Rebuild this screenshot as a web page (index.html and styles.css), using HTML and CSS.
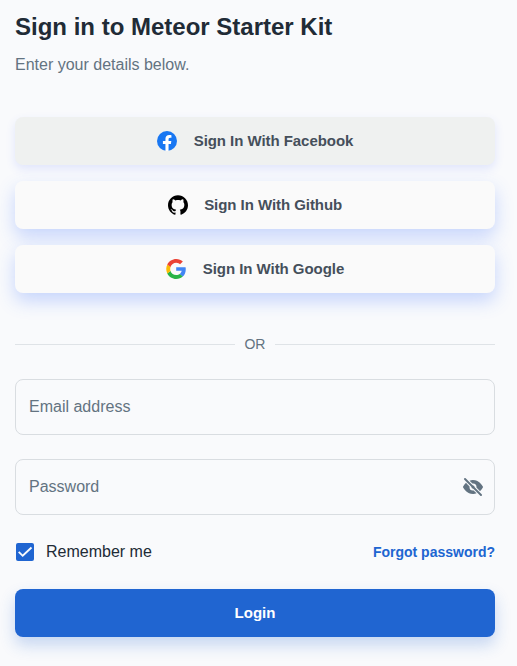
FILE: index.html
```html
<!DOCTYPE html>
<html lang="en">
<head>
<meta charset="utf-8">
<title>Sign in</title>
<link rel="stylesheet" href="styles.css">
</head>
<body>
<main class="page">
  <h1 class="title">Sign in to Meteor Starter Kit</h1>
  <p class="subtitle">Enter your details below.</p>

  <div class="social">
    <button class="social-btn active" type="button">
      <svg class="brand" viewBox="0 0 24 24"><circle cx="12" cy="12" r="12" fill="#1877f2"/><path fill="#fff" d="M16.67 15.54l.53-3.47h-3.33V9.82c0-.95.47-1.87 1.96-1.87h1.51V5s-1.37-.24-2.68-.24c-2.74 0-4.53 1.66-4.53 4.67v2.64H7.08v3.47h3.05v8.32q1.87.3 3.74 0v-8.32z"/></svg>
      <span>Sign In With Facebook</span>
    </button>
    <button class="social-btn github" type="button">
      <svg class="brand" viewBox="0 0 24 24"><path d="M12 .297c-6.63 0-12 5.373-12 12 0 5.303 3.438 9.8 8.205 11.385.6.113.82-.258.82-.577 0-.285-.01-1.04-.015-2.04-3.338.724-4.042-1.61-4.042-1.61C4.422 18.07 3.633 17.7 3.633 17.7c-1.087-.744.084-.729.084-.729 1.205.084 1.838 1.236 1.838 1.236 1.07 1.835 2.809 1.305 3.495.998.108-.776.417-1.305.76-1.605-2.665-.3-5.466-1.332-5.466-5.93 0-1.31.465-2.38 1.235-3.22-.135-.303-.54-1.523.105-3.176 0 0 1.005-.322 3.3 1.23.96-.267 1.98-.399 3-.405 1.02.006 2.04.138 3 .405 2.28-1.552 3.285-1.23 3.285-1.23.645 1.653.24 2.873.12 3.176.765.84 1.23 1.91 1.23 3.22 0 4.61-2.805 5.625-5.475 5.92.42.36.81 1.096.81 2.22 0 1.606-.015 2.896-.015 3.286 0 .315.21.69.825.57C20.565 22.092 24 17.592 24 12.297c0-6.627-5.373-12-12-12"/></svg>
      <span>Sign In With Github</span>
    </button>
    <button class="social-btn" type="button">
      <svg class="brand" viewBox="0 0 256 262"><path fill="#4285F4" d="M255.878 133.451c0-10.734-.871-18.567-2.756-26.69H130.55v48.448h71.947c-1.45 12.04-9.283 30.172-26.69 42.356l-.244 1.622 38.755 30.023 2.685.268c24.659-22.774 38.875-56.282 38.875-96.027"/><path fill="#28B446" d="M130.55 261.1c35.248 0 64.839-11.605 86.453-31.622l-41.196-31.913c-11.024 7.688-25.82 13.055-45.257 13.055-34.523 0-63.824-22.773-74.269-54.25l-1.531.13-40.298 31.187-.527 1.465C35.393 231.798 79.49 261.1 130.55 261.1"/><path fill="#FBBC05" d="M56.281 156.37c-2.756-8.123-4.351-16.827-4.351-25.82 0-8.994 1.595-17.697 4.206-25.82l-.073-1.73L15.26 71.312l-1.335.635C5.077 89.644 0 109.517 0 130.55s5.077 40.905 13.925 58.602l42.356-32.782"/><path fill="#EB4335" d="M130.55 50.479c24.514 0 41.05 10.589 50.479 19.438l36.844-35.974C195.245 12.91 165.798 0 130.55 0 79.49 0 35.393 29.301 13.925 71.947l42.211 32.783c10.59-31.477 39.891-54.251 74.414-54.251"/></svg>
      <span>Sign In With Google</span>
    </button>
  </div>

  <div class="divider"><span>OR</span></div>

  <form class="form">
    <div class="field"><span>Email address</span></div>
    <div class="field">
      <span>Password</span>
      <svg class="eye" viewBox="0 0 24 24"><circle cx="12" cy="12" r="1.5"/><path d="M15.29 18.12L14 16.78l-.07-.07-1.27-1.27a4.07 4.07 0 0 1-.61.06A3.5 3.5 0 0 1 8.5 12a4.07 4.07 0 0 1 .06-.61l-2-2L5 7.87a15.89 15.89 0 0 0-2.87 3.63 1 1 0 0 0 0 1c.63 1.09 4 6.5 9.89 6.5h.25a9.48 9.48 0 0 0 3.23-.67zM8.59 5.76l2.8 2.8A4.07 4.07 0 0 1 12 8.5a3.5 3.5 0 0 1 3.5 3.5 4.07 4.07 0 0 1-.06.61l2.68 2.68.84.84a15.89 15.89 0 0 0 2.91-3.63 1 1 0 0 0 0-1c-.64-1.11-4.16-6.68-10.14-6.5a9.48 9.48 0 0 0-3.23.67zM20.71 19.29L19.41 18l-2-2-9.52-9.53L6.42 5 4.71 3.29a1 1 0 0 0-1.42 1.42L5.53 7l1.75 1.7 7.31 7.3.07.07L16 17.41l.59.59 2.7 2.71a1 1 0 0 0 1.42 0 1 1 0 0 0 0-1.42z"/></svg>
    </div>
    <div class="options">
      <label class="remember">
        <svg class="check" viewBox="0 0 18 18"><rect width="18" height="18" rx="2" fill="#2065d1"/><path d="M2.7 8.8l4 4 8.8-8.3" fill="none" stroke="#f9fafc" stroke-width="1.9"/></svg>
        <span>Remember me</span>
      </label>
      <a class="forgot">Forgot password?</a>
    </div>
    <button class="login" type="button">Login</button>
  </form>
</main>
</body>
</html>
```
FILE: styles.css
```css
* { box-sizing: border-box; }

body {
  margin: 0;
  background: #f9fafc;
  color: #212b36;
  font: 16px/24px "Liberation Sans", Arial, sans-serif;
}

.page {
  width: 517px;
  height: 666px;
  padding: 9px 22px 0 15px;
  overflow: hidden;
}

.title {
  margin: 0;
  font-size: 24px;
  line-height: 36px;
  font-weight: 700;
}

.subtitle {
  margin: 8px 0 0;
  color: #637381;
}

.social {
  display: grid;
  gap: 16px;
  margin-top: 40px;
}

.social-btn {
  display: flex;
  align-items: center;
  justify-content: center;
  gap: 17px;
  height: 48px;
  padding: 0;
  border: 0;
  border-radius: 8px;
  background: #fafafa;
  box-shadow: 0 8px 18px rgba(63, 114, 255, 0.27);
  color: #454f5b;
  font: 700 15px/26px "Liberation Sans", Arial, sans-serif;
  letter-spacing: -0.05px;
}

.social-btn.github {
  gap: 16.4px;
}

.social-btn.active {
  background: #eff1f0;
  box-shadow: 0 4px 10px rgba(63, 94, 255, 0.13);
}

.brand {
  width: 20px;
  height: 20px;
}

.divider {
  display: flex;
  align-items: center;
  gap: 10px;
  height: 22px;
  margin: 40px 0 24px;
  color: #637381;
  font-size: 14px;
}

.divider span {
  width: 20px;
  text-indent: -0.6px;
}

.divider::before,
.divider::after {
  content: "";
  flex: 1;
  height: 1px;
  background: #dfe3e7;
}

.field {
  display: flex;
  align-items: center;
  justify-content: space-between;
  height: 56px;
  margin-bottom: 24px;
  padding: 0 9px 0 13px;
  border: 1px solid #d9dde1;
  border-radius: 8px;
  color: #637381;
}

.eye {
  width: 24px;
  height: 24px;
  fill: #637381;
}

.options {
  display: flex;
  align-items: center;
  justify-content: space-between;
  height: 26px;
}

.remember {
  display: flex;
  align-items: center;
  gap: 12px;
  padding-left: 1px;
}

.check {
  width: 18px;
  height: 18px;
}

.forgot {
  color: #2065d1;
  font-size: 14px;
  font-weight: 700;
}

.login {
  display: block;
  width: 100%;
  height: 48px;
  margin-top: 24px;
  padding: 0;
  border: 0;
  border-radius: 8px;
  background: #2065d1;
  box-shadow: 0 8px 16px rgba(32, 101, 209, 0.24);
  color: #fff;
  font: 700 15px/26px "Liberation Sans", Arial, sans-serif;
}
```
